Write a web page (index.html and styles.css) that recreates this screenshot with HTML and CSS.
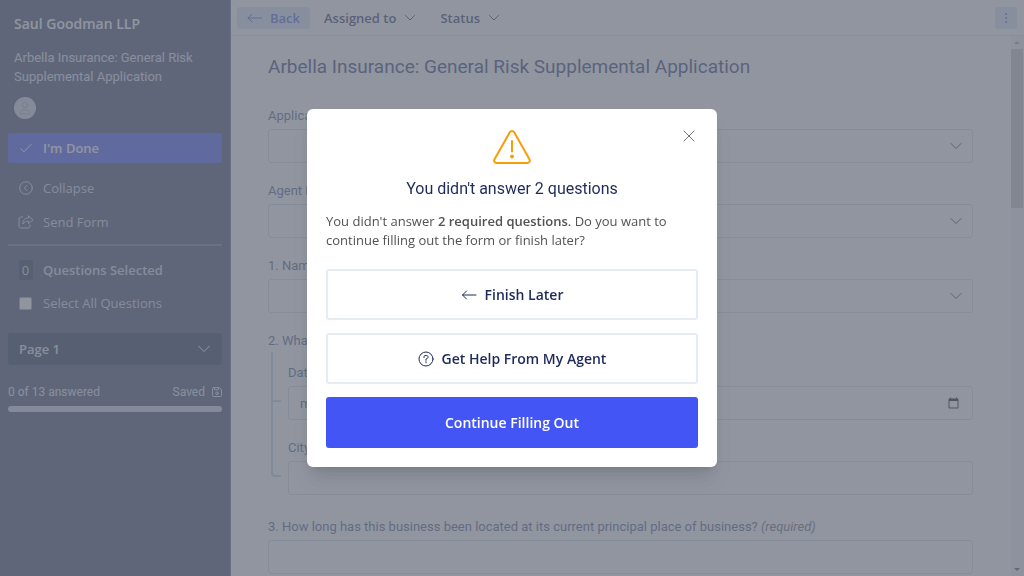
FILE: index.html
```
<!DOCTYPE html>
<html lang="en">
<head>
    <meta charset="UTF-8">
    <meta name="viewport" content="width=device-width, initial-scale=1.0">
    <title>General Risk Supplemental Application</title>
    <link rel="stylesheet" href="styles.css">
</head>
<body>
    <div class="app">
        <!-- Sidebar -->
        <aside class="sidebar">
            <div class="sidebar-head">
                <h2 class="company">Saul Goodman LLP</h2>
                <p class="form-name">Arbella Insurance: General Risk Supplemental Application</p>
                <span class="avatar">
                    <svg width="12" height="14" viewBox="0 0 12 14"><circle cx="6" cy="4" r="2.6"/><path d="M1.5 12.5v-1c0-1.600 1-2.600 2.600-2.600h3.800c1.600 0 2.600 1 2.600 2.600v1z"/></svg>
                </span>
            </div>
            <button class="side-item done" type="button">
                <span class="side-icon"><svg width="14" height="12" viewBox="0 0 14 12"><path d="M1.500 6.500l3.500 3.300L12.500 2"/></svg></span>
                I'm Done
            </button>
            <button class="side-item collapse" type="button">
                <span class="side-icon"><svg width="14" height="14" viewBox="0 0 14 14"><circle cx="7" cy="7" r="6.300"/><path d="M8 4.300L5.300 7 8 9.700"/></svg></span>
                Collapse
            </button>
            <button class="side-item send" type="button">
                <span class="side-icon"><svg width="16" height="14" viewBox="0 0 16 14"><path d="M4.500 2H3C1.800 2 1 2.800 1 4v7c0 1.200.8 2 2 2h7c1.200 0 2-.8 2-2v-1"/><path d="M10.500 1L15 4.800l-4.500 3.700V6.300C8 6.100 6.300 6.800 5 9c-.3-4 2-6.100 5.500-6.100z"/></svg></span>
                Send Form
            </button>
            <hr class="divider">
            <div class="side-item selected"><span class="side-icon"><span class="count">0</span></span>Questions Selected</div>
            <label class="side-item select-all"><span class="side-icon"><input class="check" type="checkbox"></span>Select All Questions</label>
            <div class="page-picker">
                <select class="page-select" aria-label="Page"><option>Page 1</option></select>
                <svg class="chevron" width="12" height="8" viewBox="0 0 12 8"><path d="M0.500 1L6 6.500 11.500 1"/></svg>
            </div>
            <div class="progress-text">
                <span>0 of 13 answered</span>
                <span class="saved">Saved
                    <svg width="10" height="10" viewBox="0 0 10 10"><path d="M1.500.5h5.800l2.200 2.200v5.800a1 1 0 0 1-1 1h-7a1 1 0 0 1-1-1v-7a1 1 0 0 1 1-1zM2.500.5v2.200h4V.5"/><circle cx="5" cy="6.300" r="1.300"/></svg>
                </span>
            </div>
            <div class="progress-bar"></div>
        </aside>

        <main class="main">
            <!-- Top bar -->
            <header class="topbar">
                <button class="back" type="button">
                    <svg width="15" height="10" viewBox="0 0 15 10"><path d="M14.500 5H1M5 1L1 5l4 4"/></svg>
                    Back
                </button>
                <button class="menu" type="button">Assigned to
                    <svg width="10" height="6" viewBox="0 0 10 6"><path d="M.5.5L5 5 9.500.5"/></svg>
                </button>
                <button class="menu" type="button">Status
                    <svg width="10" height="6" viewBox="0 0 10 6"><path d="M.5.5L5 5 9.500.5"/></svg>
                </button>
                <button class="more" type="button" aria-label="More">
                    <svg width="4" height="12" viewBox="0 0 4 12"><circle cx="2" cy="2" r=".4"/><circle cx="2" cy="6" r=".4"/><circle cx="2" cy="10" r=".4"/></svg>
                </button>
            </header>

            <div class="content">
                <form class="form">
                    <h1 class="form-title">Arbella Insurance: General Risk Supplemental Application</h1>
                    <div class="field">
                        <label for="applicant">Applicant</label>
                        <div class="select-box">
                            <select id="applicant"></select>
                            <svg class="chevron" width="12" height="8" viewBox="0 0 12 8"><path d="M1 1.500l5 5 5-5"/></svg>
                        </div>
                    </div>
                    <div class="field">
                        <label for="agent">Agent Name</label>
                        <div class="select-box">
                            <select id="agent"></select>
                            <svg class="chevron" width="12" height="8" viewBox="0 0 12 8"><path d="M1 1.500l5 5 5-5"/></svg>
                        </div>
                    </div>
                    <div class="field">
                        <label for="name">1. Name</label>
                        <div class="select-box">
                            <select id="name"></select>
                            <svg class="chevron" width="12" height="8" viewBox="0 0 12 8"><path d="M1 1.500l5 5 5-5"/></svg>
                        </div>
                    </div>
                    <fieldset class="group">
                        <legend>2. What</legend>
                        <div class="branches">
                            <div class="branch"></div>
                            <div class="branch last"></div>
                        </div>
                        <div class="group-fields">
                            <div class="field">
                                <label for="date">Date</label>
                                <input id="date" type="date">
                            </div>
                            <div class="field">
                                <label for="city">City</label>
                                <input id="city" type="text">
                            </div>
                        </div>
                    </fieldset>
                    <div class="field">
                        <label for="years">3. How long has this business been located at its current principal place of business? <em>(required)</em></label>
                        <input id="years" type="text">
                    </div>
                </form>
                <div class="scrollbar">
                    <span class="arrow up"></span>
                    <span class="thumb"></span>
                    <span class="arrow down"></span>
                </div>
            </div>
        </main>
    </div>

    <!-- Unanswered questions dialog -->
    <div class="overlay">
        <div class="modal" role="dialog" aria-labelledby="modal-title">
            <button class="close" type="button" aria-label="Close">
                <svg width="12" height="12" viewBox="0 0 12 12"><path d="M1 1l10 10M11 1L1 11"/></svg>
            </button>
            <svg class="warning" width="40" height="36" viewBox="0 0 40 36"><path d="M17.800 3.300a2.600 2.600 0 0 1 4.400 0l15.400 27.200a2.400 2.400 0 0 1-2.100 3.500h-31a2.400 2.400 0 0 1-2.100-3.500z"/><path d="M20 12v10.500"/><circle cx="20" cy="27.500" r="1.900"/></svg>
            <h2 class="modal-title" id="modal-title">You didn't answer 2 questions</h2>
            <p class="modal-text">You didn't answer <strong>2 required questions</strong>. Do you want to continue filling out the form or finish later?</p>
            <div class="actions">
                <button class="action" type="button">
                    <svg width="16" height="10" viewBox="0 0 16 10"><path d="M15 5H1.500M5.500 1l-4 4 4 4"/></svg>
                    Finish Later
                </button>
                <button class="action" type="button">
                    <svg width="16" height="16" viewBox="0 0 16 16"><circle cx="8" cy="8" r="7"/><path d="M6 6.500V5.300c.4-.6 1-.8 2-.8 1.300 0 2.100.6 2.100 1.600S9.300 7.400 8 8v1.400"/><path d="M8 10.800v1"/></svg>
                    Get Help From My Agent
                </button>
                <button class="action primary" type="button">Continue Filling Out</button>
            </div>
        </div>
    </div>
</body>
</html>
```
FILE: styles.css
```
* {
    margin: 0;
    padding: 0;
    box-sizing: border-box;
}

body {
    height: 100vh;
    overflow: hidden;
    font-family: "Open Sans", sans-serif;
    font-size: 13px;
    color: #4c5a88;
}

button,
input,
select {
    font: inherit;
    color: inherit;
    background: none;
    border: none;
}

svg {
    display: block;
    flex: none;
    fill: none;
    stroke: currentColor;
    stroke-linecap: round;
    stroke-linejoin: round;
}

.app {
    display: flex;
    height: 100%;
}

/* Sidebar */
.sidebar {
    flex: none;
    width: 231px;
    padding: 14px 8px 0;
    color: #fff;
    background-color: #3c466a;
    border-right: 1px solid #6a7096;
}

.sidebar-head {
    padding: 0 6px;
    margin-bottom: 14px;
}

.company {
    font-size: 14px;
    line-height: 20px;
    font-weight: 600;
    margin-bottom: 14px;
}

.form-name {
    font-family: Roboto, sans-serif;
    line-height: 19px;
    color: #e0e2ea;
    margin-bottom: 11px;
}

.avatar {
    display: flex;
    align-items: center;
    justify-content: center;
    width: 22px;
    height: 22px;
    border-radius: 50%;
    color: #a0a5b8;
    background-color: #d0d4de;
}

.side-item {
    display: flex;
    align-items: center;
    width: 100%;
    height: 30px;
    color: #d4d7e0;
    text-align: left;
}

.side-icon {
    display: flex;
    justify-content: center;
    width: 35px;
}

.done {
    font-weight: 600;
    color: #fff;
    background-color: #4355f5;
    border-radius: 3px;
    margin-bottom: 10px;
}

.send {
    margin-top: 4px;
}

.divider {
    border: none;
    height: 2px;
    background-color: #66708f;
    margin: 7px 0 9px;
}

.selected {
    font-weight: 600;
}

.count {
    width: 14px;
    line-height: 20px;
    font-weight: 400;
    text-align: center;
    background-color: #1e2848;
    border-radius: 3px;
}

.select-all {
    margin-top: 3px;
}

.check {
    appearance: none;
    width: 13px;
    height: 13px;
    background-color: #fff;
    border: 1px solid #9a9fb4;
    border-radius: 2px;
}

.page-picker {
    position: relative;
    margin: 15px 0 17px;
}

.page-select {
    display: block;
    appearance: none;
    width: 100%;
    height: 32px;
    padding: 0 11px;
    font-weight: 600;
    color: #e0e2ea;
    background-color: #1e2848;
    border-radius: 3px;
}

.chevron {
    position: absolute;
    top: 50%;
    right: 12px;
    transform: translateY(-50%);
    pointer-events: none;
}

.progress-text {
    display: flex;
    justify-content: space-between;
    font-family: Roboto, sans-serif;
    font-size: 12px;
    line-height: 20px;
    color: #e0e2ea;
    margin-bottom: 4px;
}

.saved {
    display: flex;
    align-items: center;
    gap: 7px;
}

.progress-bar {
    height: 6px;
    background-color: #d0d2e6;
    border-radius: 3px;
}

/* Top bar */
.main {
    flex: 1;
    display: flex;
    flex-direction: column;
    min-width: 0;
    background-color: #fff;
}

.topbar {
    display: flex;
    align-items: center;
    flex: none;
    height: 36px;
    padding: 0 7px 0 6px;
    border-bottom: 1px solid #e2e8f0;
}

.back {
    display: flex;
    align-items: center;
    gap: 8px;
    height: 22px;
    padding: 0 10px;
    margin-right: 14px;
    font-weight: 600;
    color: #4c60d8;
    background-color: #dbe8fb;
    border-radius: 3px;
}

.menu {
    display: flex;
    align-items: center;
    gap: 9px;
    margin-right: 25px;
    font-weight: 600;
    color: #2a3060;
}

.more {
    display: flex;
    align-items: center;
    justify-content: center;
    width: 22px;
    height: 22px;
    margin-left: auto;
    color: #4355c5;
    background-color: #dbe8fb;
    border-radius: 3px;
}

/* Form */
.content {
    flex: 1;
    display: flex;
    min-height: 0;
    overflow: hidden;
}

.form {
    flex: 1;
    padding: 18px 38px 0 37px;
    font-family: Roboto, sans-serif;
}

.form-title {
    font-size: 19px;
    line-height: 26px;
    font-weight: 400;
    color: #2c3870;
    margin-bottom: 26px;
}

.field {
    margin-bottom: 18px;
}

.field label {
    display: block;
    line-height: 19px;
    margin-bottom: 4px;
}

.field em {
    color: #64687a;
}

.field input,
.field select {
    display: block;
    appearance: none;
    width: 100%;
    height: 34px;
    padding: 0 10px;
    color: #505468;
    border: 1px solid #d4dae6;
    border-radius: 3px;
}

.select-box {
    position: relative;
}

.select-box .chevron {
    right: 11px;
    color: #2c3658;
}

.group {
    display: grid;
    grid-template-columns: 20px 1fr;
    border: none;
    margin-bottom: 22px;
}

.group legend {
    line-height: 19px;
    margin-bottom: 13px;
}

.group-fields .field:last-child {
    margin-bottom: 0;
}

.branches {
    margin: -11px 7px 17px 3px;
}

.branch {
    height: 50px;
    border-left: 2px solid #c4d2e4;
    border-bottom: 2px solid #c4d2e4;
}

.branch.last {
    height: 75px;
    border-bottom-left-radius: 4px;
}

.scrollbar {
    display: flex;
    flex-direction: column;
    align-items: center;
    width: 13px;
    padding: 5px 1px 5px 0;
    background-color: #f4f4f6;
}

.arrow {
    border: 3px solid transparent;
}

.arrow.up {
    border-top: none;
    border-bottom-color: #a0a0a0;
    margin-bottom: 5px;
}

.arrow.down {
    border-bottom: none;
    border-top-color: #505050;
    margin-top: auto;
}

.thumb {
    width: 100%;
    height: 30%;
    background-color: #c1c1c1;
}

/* Dialog */
.overlay {
    position: fixed;
    inset: 0;
    display: flex;
    align-items: center;
    justify-content: center;
    background-color: rgba(107, 114, 128, 0.75);
}

.modal {
    position: relative;
    width: 410px;
    max-width: 100%;
    padding: 20px 19px 19px;
    background-color: #fff;
    border-radius: 6px;
    box-shadow: 0 16px 20px -4px rgba(0, 0, 0, 0.1), 0 6px 8px -4px rgba(0, 0, 0, 0.1);
}

.close {
    position: absolute;
    top: 21px;
    right: 22px;
    padding: 0;
    color: #6b7280;
    cursor: pointer;
}

.warning {
    margin: 0 auto 12px;
    color: #f59e0b;
    stroke-width: 2;
}

.warning circle {
    fill: currentColor;
    stroke: none;
}

.modal-title {
    font-family: Roboto, sans-serif;
    font-size: 16px;
    line-height: 24px;
    font-weight: 400;
    text-align: center;
    color: #1e2a5a;
    margin-bottom: 11px;
}

.modal-text {
    line-height: 19px;
    color: #525252;
    margin-bottom: 19px;
}

.modal-text strong {
    font-weight: 600;
}

.actions {
    display: grid;
    gap: 13px;
}

.action {
    display: flex;
    align-items: center;
    justify-content: center;
    gap: 8px;
    height: 51px;
    font-size: 14px;
    font-weight: 600;
    color: #1e2a5a;
    border: 2px solid #e6ecf3;
    border-radius: 3px;
    cursor: pointer;
}

.action.primary {
    color: #fff;
    background-color: #4355f5;
    border-color: #4355f5;
}
```
